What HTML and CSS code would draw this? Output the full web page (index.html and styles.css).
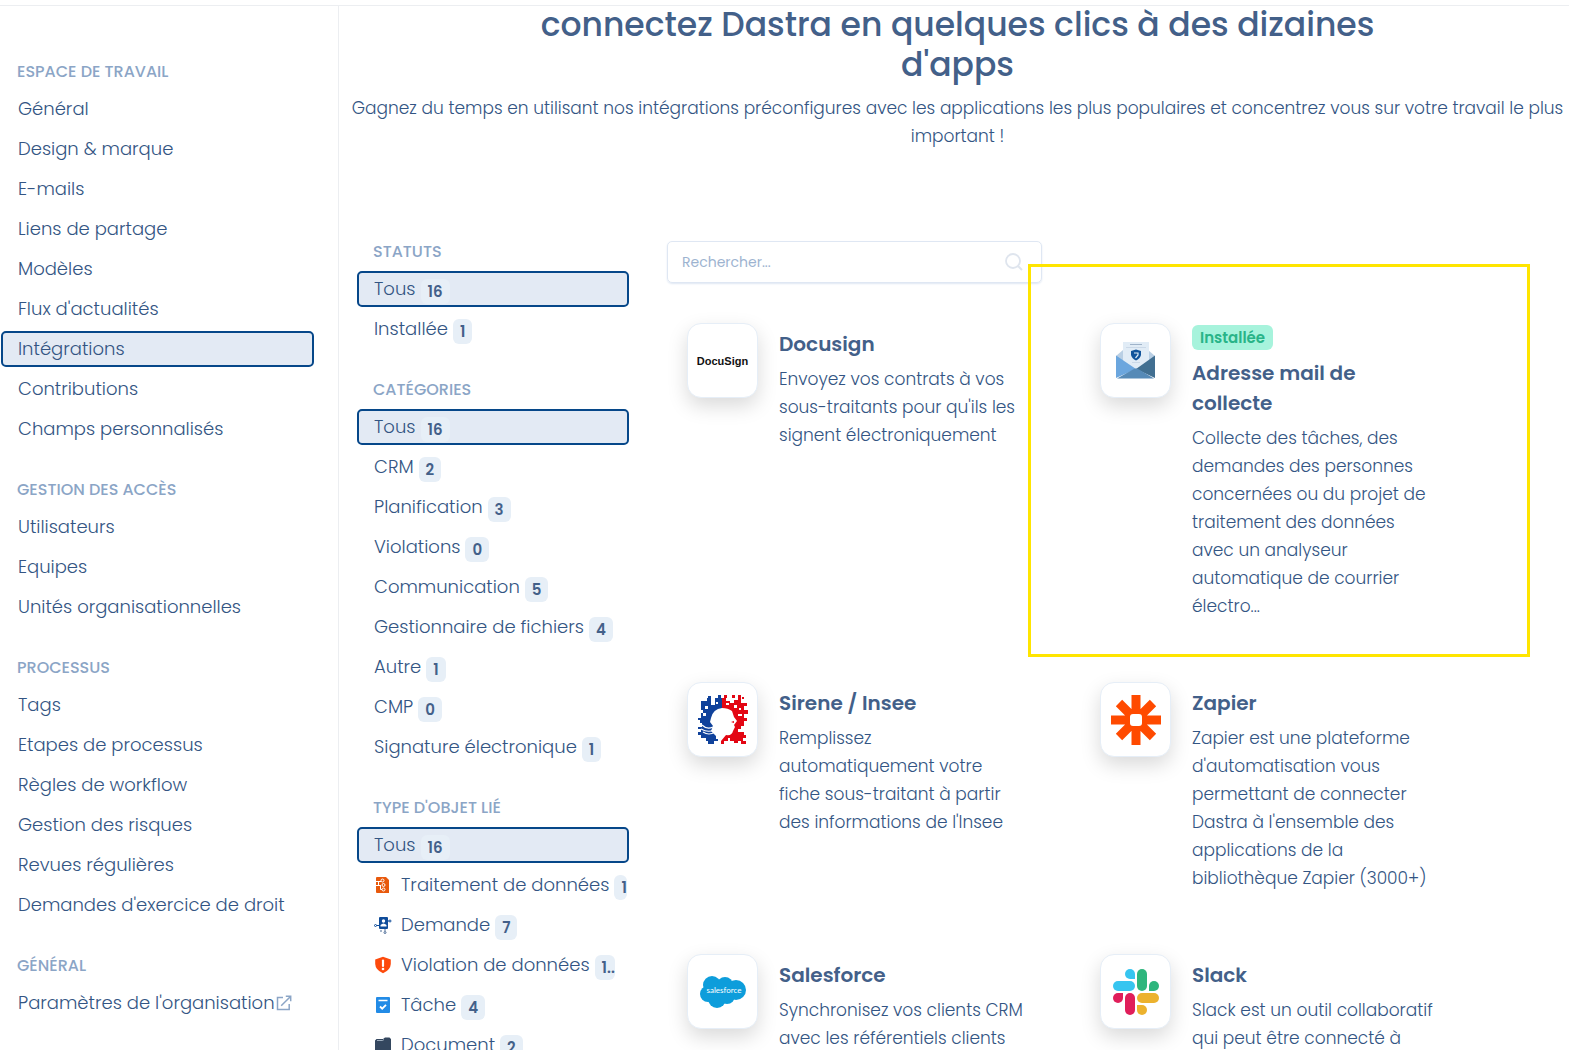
FILE: index.html
```html
<!DOCTYPE html>
<html lang="fr">
<head>
<meta charset="utf-8">
<meta name="viewport" content="width=device-width, initial-scale=1">
<title>Dastra – Intégrations</title>
<link rel="stylesheet" href="styles.css">
</head>
<body>
<header class="topbar"></header>
<div class="app">
  <nav class="sidebar" aria-label="Paramètres">
    <section class="group">
      <h2 class="group-title">ESPACE DE TRAVAIL</h2>
      <ul class="menu">
        <li><a class="item" href="#">Général</a></li>
        <li><a class="item" href="#">Design &amp; marque</a></li>
        <li><a class="item" href="#">E-mails</a></li>
        <li><a class="item" href="#">Liens de partage</a></li>
        <li><a class="item" href="#">Modèles</a></li>
        <li><a class="item" href="#">Flux d'actualités</a></li>
        <li><a class="item active" href="#" aria-current="page">Intégrations</a></li>
        <li><a class="item" href="#">Contributions</a></li>
        <li><a class="item" href="#">Champs personnalisés</a></li>
      </ul>
    </section>
    <section class="group">
      <h2 class="group-title">GESTION DES ACCÈS</h2>
      <ul class="menu">
        <li><a class="item" href="#">Utilisateurs</a></li>
        <li><a class="item" href="#">Equipes</a></li>
        <li><a class="item" href="#">Unités organisationnelles</a></li>
      </ul>
    </section>
    <section class="group">
      <h2 class="group-title">PROCESSUS</h2>
      <ul class="menu">
        <li><a class="item" href="#">Tags</a></li>
        <li><a class="item" href="#">Etapes de processus</a></li>
        <li><a class="item" href="#">Règles de workflow</a></li>
        <li><a class="item" href="#">Gestion des risques</a></li>
        <li><a class="item" href="#">Revues régulières</a></li>
        <li><a class="item" href="#">Demandes d'exercice de droit</a></li>
      </ul>
    </section>
    <section class="group">
      <h2 class="group-title">GÉNÉRAL</h2>
      <ul class="menu">
        <li><a class="item" href="#">Paramètres de l'organisation<svg class="external" viewBox="0 0 16 16" aria-hidden="true"><path d="M7 2.500H1.500V14.500H13.200V9M5.200 10.800L14.500 1.500M9.800 1.300H14.700V6.200" fill="none" stroke="currentColor" stroke-width="1.500"/></svg></a></li>
      </ul>
    </section>
  </nav>

  <main class="main">
    <div class="intro">
      <h1 class="title">connectez Dastra en quelques clics à des dizaines<br>d'apps</h1>
      <p class="lead">Gagnez du temps en utilisant nos intégrations préconfigures avec les applications les plus populaires et concentrez vous sur votre travail le plus<br>important !</p>
    </div>

    <div class="columns">
      <aside class="filters" aria-label="Filtres">
        <section class="group">
          <h2 class="group-title">STATUTS</h2>
          <ul class="menu">
            <li><a class="item active" href="#">Tous <span class="count">16</span></a></li>
            <li><a class="item" href="#">Installée <span class="count">1</span></a></li>
          </ul>
        </section>
        <section class="group">
          <h2 class="group-title">CATÉGORIES</h2>
          <ul class="menu">
            <li><a class="item active" href="#">Tous <span class="count">16</span></a></li>
            <li><a class="item" href="#">CRM <span class="count">2</span></a></li>
            <li><a class="item" href="#">Planification <span class="count">3</span></a></li>
            <li><a class="item" href="#">Violations <span class="count">0</span></a></li>
            <li><a class="item" href="#">Communication <span class="count">5</span></a></li>
            <li><a class="item" href="#">Gestionnaire de fichiers <span class="count">4</span></a></li>
            <li><a class="item" href="#">Autre <span class="count">1</span></a></li>
            <li><a class="item" href="#">CMP <span class="count">0</span></a></li>
            <li><a class="item" href="#">Signature électronique <span class="count">1</span></a></li>
          </ul>
        </section>
        <section class="group">
          <h2 class="group-title">TYPE D'OBJET LIÉ</h2>
          <ul class="menu">
            <li><a class="item active" href="#">Tous <span class="count">16</span></a></li>
            <li><a class="item" href="#"><svg class="kind" viewBox="0 0 18 18" aria-hidden="true"><path d="M3 1h9l3 3v13H3a1 1 0 0 1-1-1V2a1 1 0 0 1 1-1z" fill="#e8590c"/><g fill="none" stroke="#fff"><path d="M2 5.500H7M4.500 5.500V9.500H7M2 9.500H6.500V13.500H8"/><circle cx="8.500" cy="4.500" r="1.500"/><circle cx="9.500" cy="9" r="1.500"/><circle cx="9.500" cy="13.500" r="1.500"/></g></svg>Traitement de données <span class="count clipped">1</span></a></li>
            <li><a class="item" href="#"><svg class="kind" viewBox="0 0 18 18" aria-hidden="true"><rect x="5" y="1" width="9" height="12" rx="1" fill="#0f4c9a"/><circle cx="9.500" cy="5" r="1.700" fill="#fff"/><path d="M6.500 10.500V9q3-3 6 0v1.500z" fill="#fff"/><g fill="none" stroke="#0f4c9a"><circle cx="1.500" cy="9.500" r="1"/><path d="M2.500 9.500H5M14 5h1"/><circle cx="16" cy="5" r="1"/></g><g fill="none" stroke="#4a6a96"><circle cx="11" cy="16.500" r="1"/><path d="M7 14v2M11 13v2"/></g></svg>Demande <span class="count">7</span></a></li>
            <li><a class="item" href="#"><svg class="kind" viewBox="0 0 18 18" aria-hidden="true"><path d="M9 .8L16.800 3.500V8Q16.500 14 9 17.300Q1.500 14 1.200 8V3.500z" fill="#fd4a0c"/><path d="M9 4.500V10" stroke="#fff" stroke-width="2.200" stroke-linecap="round"/><circle cx="9" cy="13" r="1.300" fill="#fff"/></svg>Violation de données <span class="count clipped">1..</span></a></li>
            <li><a class="item" href="#"><svg class="kind" viewBox="0 0 18 18" aria-hidden="true"><rect x="2" y="1" width="14" height="16" rx="1" fill="#228be6"/><path d="M4.500 4.500H13.500" stroke="#fff" stroke-width="1.300"/><path d="M6 10.500L8.200 12.700L12 8.800" fill="none" stroke="#fff" stroke-width="1.800"/></svg>Tâche <span class="count">4</span></a></li>
            <li><a class="item" href="#"><svg class="kind" viewBox="0 0 18 18" aria-hidden="true"><path d="M1 4.500L2.500 3H9L11 1.500H15.500L17 3V16H1z" fill="#34475f"/><path d="M3 4.500H8.500L10 3.500" fill="none" stroke="#b9c6d6" stroke-width=".8"/></svg>Document <span class="count">2</span></a></li>
          </ul>
        </section>
      </aside>

      <div class="results">
        <form class="search" role="search">
          <input class="search-input" type="search" placeholder="Rechercher..." aria-label="Rechercher">
          <svg class="search-icon" viewBox="0 0 18 18" aria-hidden="true"><circle cx="8" cy="8" r="7" fill="none" stroke="currentColor" stroke-width="1.800"/><path d="M13 13L17 17" stroke="currentColor" stroke-width="2"/></svg>
        </form>

        <div class="cards">
          <article class="card">
            <div class="logo"><span class="docusign">DocuSign</span></div>
            <div class="card-body">
              <h3 class="card-title">Docusign</h3>
              <p class="card-text">Envoyez vos contrats à vos<br>sous-traitants pour qu'ils les<br>signent électroniquement</p>
            </div>
          </article>

          <article class="card highlighted">
            <div class="logo">
              <svg class="mark" viewBox="0 0 50 50" aria-hidden="true">
                <path d="M5 20L12 14H37L44 20V34H5z" fill="#b9cfe4"/>
                <rect x="12" y="6" width="26" height="27" fill="#e1ecf6"/>
                <path d="M19 8.500H31" stroke="#9fb3c9"/>
                <path d="M15 11.500H35M21 26.500H29" stroke="#c5d4e4" stroke-width=".8"/>
                <path d="M25 13.500L30 15V19Q29 22.500 25 24.500Q21 22.500 20 19V15z" fill="#12549b"/>
                <path d="M23 17H27V19L24.500 22" fill="none" stroke="#dcebf8" stroke-width="1.200"/>
                <path d="M5 19.500L25 33L5 42z" fill="#6ba6de"/>
                <path d="M44 19.500L25 33L44 42z" fill="#416f91"/>
                <path d="M6 42.500L22 33.500Q25 31.500 28 33.500L43 42.500z" fill="#568ab7"/>
              </svg>
            </div>
            <div class="card-body">
              <span class="status">Installée</span>
              <h3 class="card-title">Adresse mail de<br>collecte</h3>
              <p class="card-text">Collecte des tâches, des<br>demandes des personnes<br>concernées ou du projet de<br>traitement des données<br>avec un analyseur<br>automatique de courrier<br>électro...</p>
            </div>
          </article>

          <article class="card">
            <div class="logo">
              <svg class="mark" viewBox="0 0 50 50" aria-hidden="true">
                <path d="M3 6H9V3H13V6H17V3H24V13Q15 14 13 23L12 27L15 31L13 36L18 41V44H20V46H16V49H10V46H8V43H3V40H0V37H3V34H0V32H4V28H2V25H0V23H3V18H5V15H3z" fill="#10429b"/>
                <path d="M24 3H28V6H32V8H36V5H40V2H43V8H49V11H46V15H50V19H46V23H49V26H46V31H43V34H40V37H46V40H48V43H45V46H48V49H43V46H40V48H36V46H32V43H30V46H26V49H23V46L28 40Q34 41 35 36L37 32L36 30L39 26L36 22L34 16Q30 13 24 13z" fill="#e30613"/>
                <path d="M20 0H23V3H20zM10 1H13V3H10z" fill="#10429b"/>
                <path d="M26 0H29V3H26zM34 0H37V3H34zM40 0H43V2H40zM44 2H46V4H44z" fill="#e30613"/>
                <path d="M13 6H17V10H13zM7 11H10V14H7zM18 7H20V9H18zM5 18H8V21H5zM28 8H31V10H28zM36 10H39V13H36zM41 13H43V15H41zM40 19H44V21H40z" fill="#fff"/>
                <path d="M4 30Q9 35 15 32M5 37Q11 41 17 37M3 34Q10 38 16 35" fill="none" stroke="#fff" stroke-width="1.100"/>
                <path d="M33 27L36 26V28z" fill="#e30613"/>
              </svg>
            </div>
            <div class="card-body">
              <h3 class="card-title">Sirene / Insee</h3>
              <p class="card-text">Remplissez<br>automatiquement votre<br>fiche sous-traitant à partir<br>des informations de l'Insee</p>
            </div>
          </article>

          <article class="card">
            <div class="logo">
              <svg class="mark" viewBox="0 0 50 50" aria-hidden="true">
                <path d="M25 0V50M0 25H50M8 8L42 42M42 8L8 42" stroke="#ff4a00" stroke-width="9"/>
                <rect x="19" y="19" width="12" height="12" rx="3" fill="#fff"/>
              </svg>
            </div>
            <div class="card-body">
              <h3 class="card-title">Zapier</h3>
              <p class="card-text">Zapier est une plateforme<br>d'automatisation vous<br>permettant de connecter<br>Dastra à l'ensemble des<br>applications de la<br>bibliothèque Zapier (3000+)</p>
            </div>
          </article>

          <article class="card">
            <div class="logo">
              <svg class="mark" viewBox="0 0 50 50" aria-hidden="true">
                <g fill="#0d9ddb"><circle cx="14" cy="18" r="9"/><circle cx="27" cy="18" r="8"/><circle cx="38" cy="23" r="10"/><circle cx="10" cy="27" r="8"/><circle cx="19" cy="32" r="9"/><circle cx="29" cy="29" r="8"/><path d="M12 16H34V30H12z"/></g>
                <text class="salesforce" x="26" y="26" text-anchor="middle">salesforce</text>
              </svg>
            </div>
            <div class="card-body">
              <h3 class="card-title">Salesforce</h3>
              <p class="card-text">Synchronisez vos clients CRM<br>avec les référentiels clients</p>
            </div>
          </article>

          <article class="card">
            <div class="logo">
              <svg class="mark" viewBox="0 0 50 50" aria-hidden="true">
                <g fill="#36c5f0"><rect x="2" y="14" width="22" height="10" rx="5"/><path d="M19 2a5 5 0 0 1 5 5v5h-5a5 5 0 0 1 0-10z"/></g>
                <g fill="#2eb67d"><rect x="26" y="2" width="10" height="22" rx="5"/><path d="M48 19a5 5 0 0 1-5 5h-5v-5a5 5 0 0 1 10 0z"/></g>
                <g fill="#ecb22e"><rect x="26" y="26" width="22" height="10" rx="5"/><path d="M31 48a5 5 0 0 1-5-5v-5h5a5 5 0 0 1 0 10z"/></g>
                <g fill="#e01e5a"><rect x="14" y="26" width="10" height="22" rx="5"/><path d="M2 31a5 5 0 0 1 5-5h5v5a5 5 0 0 1-10 0z"/></g>
              </svg>
            </div>
            <div class="card-body">
              <h3 class="card-title">Slack</h3>
              <p class="card-text">Slack est un outil collaboratif<br>qui peut être connecté à</p>
            </div>
          </article>
        </div>
      </div>
    </div>
  </main>
</div>
</body>
</html>
```
FILE: styles.css
```css
* {
  box-sizing: border-box;
}

body {
  margin: 0;
  background: #fff;
  color: #436089;
  font-family: Poppins, Inter, sans-serif;
  font-size: 17px;
}

h1, h2, h3, p, ul {
  margin: 0;
  padding: 0;
}

ul {
  list-style: none;
}

.topbar {
  position: fixed;
  top: 0;
  left: 0;
  right: 0;
  height: 6px;
  border-bottom: 1px solid #eceef1;
}

.app {
  display: flex;
  height: 100vh;
  padding-top: 5px;
  overflow: hidden;
}

/* Left navigation */
.sidebar {
  flex: 0 0 339px;
  padding: 55px 24px 0 1px;
  border-right: 1px solid #eceef1;
}

.group + .group {
  margin-top: 31px;
}

.group-title {
  margin: 0 16px 7px;
  color: #8ba5c6;
  font-size: 16px;
  font-weight: 500;
  line-height: 24px;
}

.menu {
  display: grid;
  grid-template-columns: minmax(0, 1fr);
  gap: 4px;
}

.item {
  display: flex;
  align-items: center;
  height: 36px;
  padding: 0 15px;
  border: 2px solid transparent;
  border-radius: 5px;
  overflow: hidden;
  color: #335583;
  font-size: 18px;
  font-weight: 300;
  line-height: 24px;
  text-decoration: none;
  white-space: nowrap;
}

.item.active {
  border-color: #064789;
  background: #e3eaf4;
}

.external {
  width: 16px;
  height: 16px;
  margin-left: 1px;
  color: #8ba5c6;
}

/* Page heading */
.main {
  flex: 1;
  min-width: 0;
}

.intro {
  padding-left: 7px;
  text-align: center;
}

.title {
  font-size: 33px;
  font-weight: 500;
  line-height: 40px;
}

.lead {
  margin-top: 9px;
  color: #335583;
  font-size: 17px;
  font-weight: 300;
  line-height: 28px;
  white-space: nowrap;
}

.columns {
  display: flex;
  gap: 38px;
  margin-top: 90px;
  padding: 0 11px 0 18px;
}

/* Filters */
.filters {
  flex: 0 0 272px;
  min-width: 0;
}

.filters .item {
  padding-right: 1px;
}

.count {
  flex: none;
  height: 25px;
  margin: 4px 0 0 5px;
  padding: 0 7px;
  border-radius: 6px;
  background: #e7eff7;
  color: #436089;
  font-size: 15px;
  font-weight: 600;
  line-height: 25px;
}

.count.clipped {
  padding-right: 0;
}

.kind {
  flex: none;
  width: 18px;
  height: 18px;
  margin-right: 9px;
}

/* Search and integration cards */
.results {
  flex: 1;
  min-width: 0;
  padding-top: 1px;
}

.search {
  display: flex;
  align-items: center;
  width: 375px;
  height: 42px;
  padding: 0 18px 0 14px;
  border: 1px solid #dfe7f3;
  border-radius: 5px;
  box-shadow: 0 1px 2px #dfe7f3;
}

.search-input {
  flex: 1;
  min-width: 0;
  padding: 0;
  border: 0;
  outline: 0;
  background: none;
  color: inherit;
  font: 14px/24px Poppins, Inter, sans-serif;
}

.search-input::placeholder {
  color: #9db3d0;
}

.search-icon {
  width: 18px;
  height: 18px;
  color: #dfe5ee;
}

.cards {
  display: grid;
  grid-template-columns: repeat(2, minmax(0, 413px));
  row-gap: 62px;
  padding: 40px 0 0 20px;
}

.card {
  position: relative;
  display: flex;
  align-items: flex-start;
  gap: 21px;
}

.highlighted::after {
  content: "";
  position: absolute;
  inset: -59px -17px -37px -72px;
  border: 3px solid #ffe500;
  pointer-events: none;
}

.logo {
  display: flex;
  flex: 0 0 71px;
  align-items: center;
  justify-content: center;
  height: 75px;
  border: 1px solid #e6eef7;
  border-radius: 14px;
  background: #fff;
  box-shadow: 0 8px 20px #00000026;
}

.mark {
  width: 50px;
  height: 50px;
}

.docusign {
  color: #111;
  font: bold 11px "Liberation Sans", sans-serif;
}

.salesforce {
  fill: #fff;
  font: 8px Lato, sans-serif;
}

.card-body {
  padding-top: 6px;
  white-space: nowrap;
}

.highlighted .card-body {
  padding-top: 2px;
}

.status {
  display: block;
  width: max-content;
  margin-bottom: 8px;
  padding: 0 8px;
  border-radius: 6px;
  background: #a7f3dc;
  color: #29b488;
  font-size: 15px;
  font-weight: 600;
  line-height: 25px;
}

.card-title {
  font-size: 20px;
  font-weight: 600;
  line-height: 30px;
}

.card-text {
  margin-top: 6px;
  color: #335583;
  font-size: 17px;
  font-weight: 300;
  line-height: 28px;
}
```
